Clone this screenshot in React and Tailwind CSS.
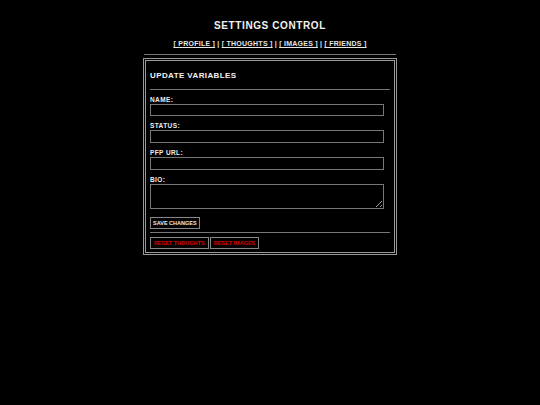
import React from "react";

function Field({ label, children, first }) {
  return (
    <div className={first ? "mt-[6px]" : "mt-[6.5px]"}>
      <div className="text-[6.5px] leading-[8px] font-bold tracking-[0.4px] text-[#eee]">{label}</div>
      {children}
    </div>
  );
}

export default function App() {
  const links = ["[ PROFILE ]", "[ THOUGHTS ]", "[ IMAGES ]", "[ FRIENDS ]"];
  return (
    <div className="min-h-[405px] w-full bg-black text-white font-['Liberation_Sans',Arial,sans-serif] pt-[20px]">
      <div className="w-[254px] mx-auto">
        <div className="text-center text-[10px] leading-[12px] font-bold tracking-[0.6px] text-[#f2f2f2]">
          SETTINGS CONTROL
        </div>
        <div className="mt-[7px] text-center text-[7px] leading-[9px] font-bold tracking-[0.25px] text-[#e6e6e6]">
          {links.map((l, i) => (
            <React.Fragment key={l}>
              {i > 0 && <span> | </span>}
              <span className="underline">{l}</span>
            </React.Fragment>
          ))}
        </div>
        <div className="mt-[6px] h-[1px] mx-[1px] bg-[#777]" />
        <div className="mt-[3px] border-[3px] border-double border-[#999] px-[4px] pt-[10px] pb-[3px]">
          <div className="text-[8px] leading-[10px] font-bold tracking-[0.4px] text-[#f2f2f2]">UPDATE VARIABLES</div>
          <div className="mt-[7.5px] h-[1px] bg-[#777]" />
          <Field label="NAME:" first>
            <input className="block w-[234px] h-[12px] bg-black border border-[#777] outline-none" />
          </Field>
          <Field label="STATUS:">
            <input className="block w-[234px] h-[12.5px] bg-black border border-[#777] outline-none" />
          </Field>
          <Field label="PFP URL:">
            <input className="block w-[234px] h-[12.5px] bg-black border border-[#777] outline-none" />
          </Field>
          <div className="mt-[6px]">
            <div className="text-[6.5px] leading-[8px] font-bold tracking-[0.4px] text-[#eee]">BIO:</div>
            <textarea className="block w-[234px] h-[25.5px] bg-black border border-[#777] outline-none resize-y" />
          </div>
          <div className="mt-[8px] flex">
            <button className="h-[12px] px-[2px] border border-[#888] bg-black text-[5.5px] leading-[10px] font-bold text-[#eee]">
              SAVE CHANGES
            </button>
          </div>
          <div className="mt-[3px] h-[1px] bg-[#777]" />
          <div className="mt-[3.5px] flex gap-[1.5px]">
            <button className="h-[12.5px] w-[58.5px] border border-[#888] bg-black text-[5.5px] leading-[10px] font-bold text-[#d00]">
              RESET THOUGHTS
            </button>
            <button className="h-[12.5px] w-[49px] border border-[#888] bg-black text-[5.5px] leading-[10px] font-bold text-[#d00]">
              RESET IMAGES
            </button>
          </div>
        </div>
      </div>
    </div>
  );
}
